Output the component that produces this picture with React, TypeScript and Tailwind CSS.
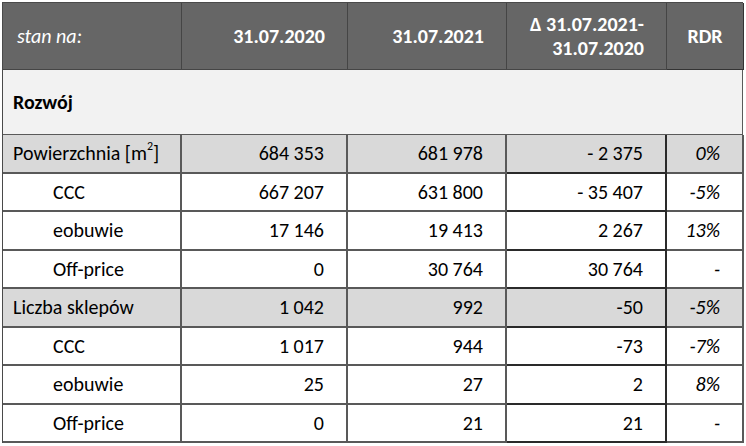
import clsx from "clsx";

type Row = {
  label: string;
  sup?: string;
  values: [string, string, string, string];
  group?: boolean;
};

const rows: Row[] = [
  { label: "Powierzchnia [m", sup: "2", values: ["684 353", "681 978", "- 2 375", "0%"], group: true },
  { label: "CCC", values: ["667 207", "631 800", "- 35 407", "-5%"] },
  { label: "eobuwie", values: ["17 146", "19 413", "2 267", "13%"] },
  { label: "Off-price", values: ["0", "30 764", "30 764", "-"] },
  { label: "Liczba sklepów", values: ["1 042", "992", "-50", "-5%"], group: true },
  { label: "CCC", values: ["1 017", "944", "-73", "-7%"] },
  { label: "eobuwie", values: ["25", "27", "2", "8%"] },
  { label: "Off-price", values: ["0", "21", "21", "-"] },
];

export default function App() {
  return (
    <div className="w-[746px] h-[446px] bg-white pt-[2px] pl-[2px] font-['Carlito','Liberation_Sans',sans-serif] text-[20px] text-black">
      <div className="w-[741px] border-l border-t border-[#4a4a4a]">
        {/* header */}
        <div className="grid grid-cols-[179px_166px_159px_160px_77px] h-[67px] bg-[#666666] text-white font-bold">
          <div className="flex items-center pl-[14px] italic font-normal border-r border-b border-[#454545]">stan na:</div>
          <div className="flex items-center justify-end pr-[22px] border-r border-b border-[#454545]">31.07.2020</div>
          <div className="flex items-center justify-end pr-[22px] border-r border-b border-[#454545]">31.07.2021</div>
          <div className="flex flex-col justify-center items-end pr-[22px] leading-[24px] border-r border-b border-[#454545]">
            <span>Δ 31.07.2021-</span>
            <span>31.07.2020</span>
          </div>
          <div className="flex items-center justify-center border-r border-b border-[#333333]">RDR</div>
        </div>

        {/* section */}
        <div className="h-[65px] flex items-center pl-[10px] font-bold bg-[#f2f2f2] border-r border-b border-[#5a5a5a]">Rozwój</div>

        {rows.map((r, i) => (
          <div
            key={i}
            className={clsx(
              "grid grid-cols-[179px_166px_159px_160px_77px] h-[38.5px]",
              r.group ? "bg-[#d9d9d9]" : "bg-white"
            )}
          >
            <div className={clsx("flex items-center border-r-2 border-b-2 border-[#595959]", r.group ? "pl-[10px]" : "pl-[50px]")}>
              {r.label}
              {r.sup && <sup className="text-[12px] -top-[7px]">{r.sup}</sup>}
              {r.sup && "]"}
            </div>
            <div className="flex items-center justify-end pr-[22px] border-r-2 border-b-2 border-[#595959]">{r.values[0]}</div>
            <div className="flex items-center justify-end pr-[22px] border-r-2 border-b-2 border-[#595959]">{r.values[1]}</div>
            <div className="flex items-center justify-end pr-[22px] border-r-2 border-b-2 border-[#2a2a2a]">{r.values[2]}</div>
            <div className="flex items-center justify-end pr-[22px] italic border-r-2 border-b-2 border-[#595959]">{r.values[3]}</div>
          </div>
        ))}
      </div>
    </div>
  );
}
